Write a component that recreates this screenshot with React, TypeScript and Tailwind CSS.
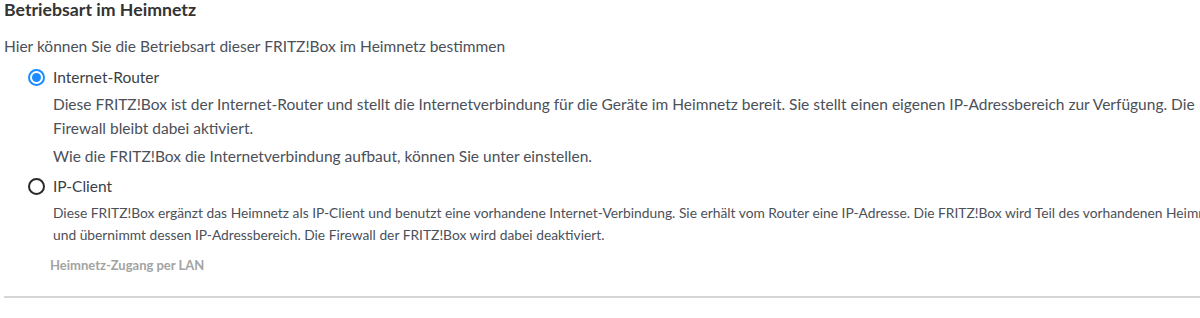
import React from "react";

export default function App() {
  return (
    <div className="w-[1200px] h-[318px] overflow-hidden bg-white font-['Lato',sans-serif]">
      <div className="w-[1400px] pl-[4px] pt-[1px]">
        <h2 className="text-[17.7px] leading-[18px] font-bold text-[#333]">Betriebsart im Heimnetz</h2>
        <p className="mt-[17px] text-[15.5px] leading-[20px] text-[#4b5059]">
          Hier können Sie die Betriebsart dieser FRITZ!Box im Heimnetz bestimmen
        </p>
        <div className="mt-[11px] flex items-center gap-[8px] pl-[24px] h-[20px]">
          <span className="flex h-[17px] w-[17px] items-center justify-center rounded-full border-2 border-[#1a8cff]">
            <span className="h-[9px] w-[9px] rounded-full bg-[#1a8cff]" />
          </span>
          <span className="text-[15.5px] leading-[20px] text-[#3a3f47]">Internet-Router</span>
        </div>
        <div className="pl-[49px] text-[15.5px] text-[#4b5059] whitespace-nowrap">
          <p className="mt-[5px] leading-[24px]">
            Diese FRITZ!Box ist der Internet-Router und stellt die Internetverbindung für die Geräte im Heimnetz bereit. Sie stellt einen eigenen IP-Adressbereich zur Verfügung. Die
            <br />
            Firewall bleibt dabei aktiviert.
          </p>
          <p className="mt-[4px] leading-[24px]">
            Wie die FRITZ!Box die Internetverbindung aufbaut, können Sie unter einstellen.
          </p>
        </div>
        <div className="mt-[8px] flex items-center gap-[8px] pl-[24px] h-[20px]">
          <span className="h-[17px] w-[17px] rounded-full border-2 border-[#2a2a2a]" />
          <span className="text-[15.5px] leading-[20px] text-[#3a3f47]">IP-Client</span>
        </div>
        <div className="pl-[49px] text-[13.8px] text-[#4b5059] whitespace-nowrap">
          <p className="mt-[6px] leading-[22px]">
            Diese FRITZ!Box ergänzt das Heimnetz als IP-Client und benutzt eine vorhandene Internet-Verbindung. Sie erhält vom Router eine IP-Adresse. Die FRITZ!Box wird Teil des vorhandenen Heimnetzes
            <br />
            und übernimmt dessen IP-Adressbereich. Die Firewall der FRITZ!Box wird dabei deaktiviert.
          </p>
        </div>
        <p className="mt-[11px] pl-[46px] text-[13px] leading-[16px] font-bold text-[#a3a3a3]">Heimnetz-Zugang per LAN</p>
        <div className="mt-[23px] h-[2px] bg-[#d6d6d6]" />
      </div>
    </div>
  );
}
